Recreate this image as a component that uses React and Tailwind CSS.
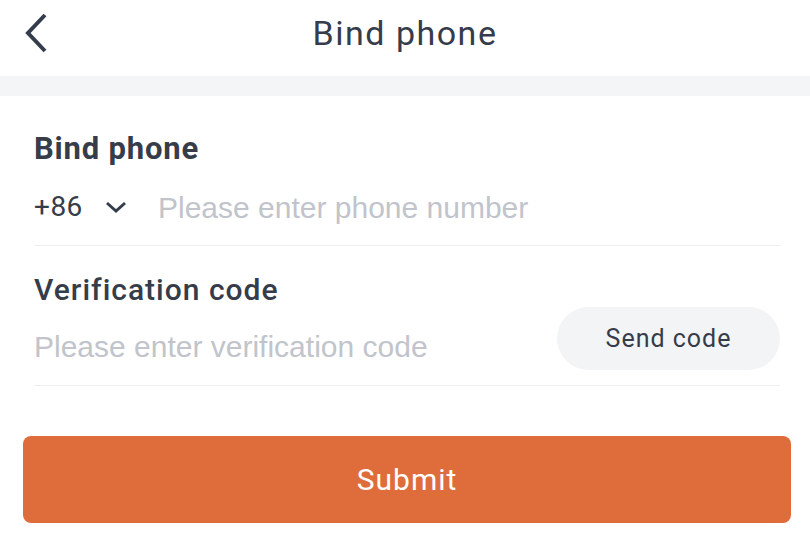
import { useState } from 'react';

const din = { fontFamily: "Roboto, 'Noto Sans', sans-serif" };
const helv = { fontFamily: "'Liberation Sans', Arial, sans-serif" };

function BackIcon() {
  return (
    <svg width="30" height="42" viewBox="0 0 30 42" fill="none">
      <path d="M24 3 L7 21 L24 39" stroke="#353c4b" strokeWidth="4" strokeLinecap="butt" strokeLinejoin="miter" />
    </svg>
  );
}

function ChevronDown() {
  return (
    <svg width="22" height="14" viewBox="0 0 22 14" fill="none">
      <path d="M2 3 L11 11 L20 3" stroke="#353c4b" strokeWidth="3" />
    </svg>
  );
}

export default function App() {
  const [phone, setPhone] = useState('');
  const [code, setCode] = useState('');

  return (
    <div className="w-[810px] h-[533px] bg-white text-[#363c4a] overflow-hidden" style={din}>
      {/* header */}
      <div className="relative h-[76px] flex items-center justify-center pb-[10px]">
        <button className="absolute left-[21px] top-[12px]">
          <BackIcon />
        </button>
        <h1 className="text-[34px] leading-none tracking-[1.5px]">Bind phone</h1>
      </div>
      <div className="h-[20px] bg-[#f4f5f7]" />

      <div className="pl-[34px] pr-[30px]">
        {/* phone */}
        <div className="pt-[33px] text-[31px] font-bold leading-[40px] tracking-[0.8px]">Bind phone</div>
        <div className="h-[77px] flex items-center border-b border-[#eeeeee]">
          <div className="flex items-center gap-[22px] w-[124px] text-[28px] tracking-[0.5px]">
            <span>+86</span>
            <ChevronDown />
          </div>
          <input
            value={phone}
            onChange={e => setPhone(e.target.value)}
            placeholder="Please enter phone number"
            className="flex-1 text-[30px] outline-none placeholder:text-[#c1c4cb] bg-transparent"
            style={helv}
          />
        </div>

        {/* verification */}
        <div className="pt-[25px] text-[30px] font-medium leading-[37px] tracking-[1px]">Verification code</div>
        <div className="h-[78px] flex items-start border-b border-[#eeeeee]">
          <input
            value={code}
            onChange={e => setCode(e.target.value)}
            placeholder="Please enter verification code"
            className="flex-1 mt-[22px] h-[32px] text-[30px] outline-none placeholder:text-[#c1c4cb] bg-transparent"
            style={helv}
          />
          <button className="-mt-[1px] w-[223px] h-[63px] rounded-full bg-[#f3f4f6] text-[25px] tracking-[1px] text-[#363c4a]">
            Send code
          </button>
        </div>
      </div>

      <div className="pl-[23px] pr-[19px] pt-[50px]">
        <button className="w-full h-[87px] rounded-[8px] bg-[#df6d3b] text-white text-[30px] tracking-[1px]">
          Submit
        </button>
      </div>
    </div>
  );
}
